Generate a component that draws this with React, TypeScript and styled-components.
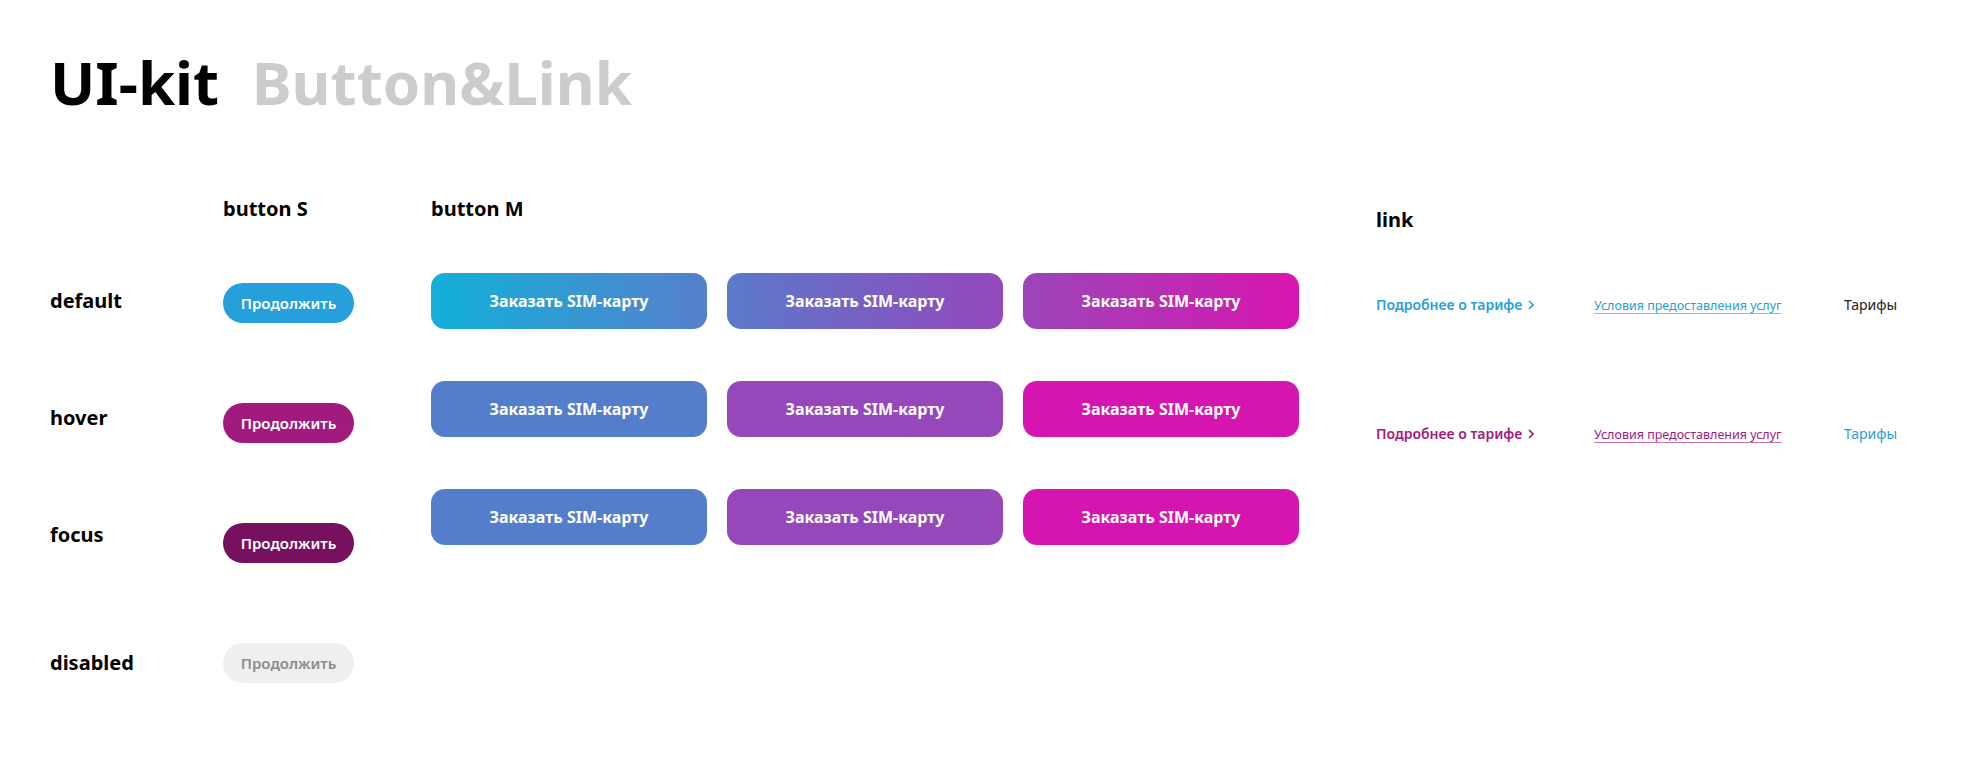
import styled, { createGlobalStyle } from "styled-components";

const GlobalStyle = createGlobalStyle`
  body {
    margin: 0;
    background: #fff;
    font-family: "Noto Sans", "Open Sans", Arial, sans-serif;
    color: #000;
  }
`;

type Variant = "default" | "hover" | "focus" | "disabled";

const STATES: { name: Variant; top: number }[] = [
  { name: "default", top: 64 },
  { name: "hover", top: 89 },
  { name: "focus", top: 89 },
  { name: "disabled", top: 100 },
];

const SMALL_BG: Record<Variant, string> = {
  default: "#26a0da",
  hover: "#a01a80",
  focus: "#77105e",
  disabled: "#efefef",
};

const M_ROWS = [
  [
    "linear-gradient(90deg, #12b0da 0%, #5680cc 100%)",
    "linear-gradient(90deg, #5a7aca 0%, #9547bb 100%)",
    "linear-gradient(90deg, #9a46b9 0%, #d915b0 100%)",
  ],
  ["#547ecc", "#9648bb", "#d615b0"],
  ["#547ecc", "#9648bb", "#d615b0"],
];

const ChevronRight = ({ color }: { color: string }) => (
  <svg width="6" height="10" viewBox="0 0 6 10" fill="none">
    <path d="M1 1l4 4-4 4" stroke={color} strokeWidth="1.6" />
  </svg>
);

const App = () => {
  return (
    <Page>
      <GlobalStyle />
      <Title>
        UI-kit <Sub>Button&amp;Link</Sub>
      </Title>
      <Board>
        <LabelCol>
          <Heading />
          {STATES.map((s) => (
            <StateLabel key={s.name} $top={s.top}>
              {s.name}
            </StateLabel>
          ))}
        </LabelCol>

        <SmallCol>
          <Heading>button S</Heading>
          {STATES.map((s) => (
            <SmallButton key={s.name} $variant={s.name}>
              Продолжить
            </SmallButton>
          ))}
        </SmallCol>

        <MediumCol>
          <Heading>button M</Heading>
          <MediumGrid>
            {M_ROWS.map((row, i) =>
              row.map((bg, j) => (
                <MediumButton key={`${i}-${j}`} $bg={bg}>
                  Заказать SIM-карту
                </MediumButton>
              ))
            )}
          </MediumGrid>
        </MediumCol>

        <LinkCol>
          <LinkHeading>link</LinkHeading>
          <LinkRow>
            <MoreLink $color="#26a0da">
              Подробнее о тарифе <ChevronRight color="#26a0da" />
            </MoreLink>
            <TermsLink $color="#26a0da" $line="rgba(38, 160, 218, 0.6)">
              Условия предоставления услуг
            </TermsLink>
            <PlainLink $color="#222">Тарифы</PlainLink>
          </LinkRow>
          <LinkRow $gap>
            <MoreLink $color="#a01a80">
              Подробнее о тарифе <ChevronRight color="#a01a80" />
            </MoreLink>
            <TermsLink $color="#a01a80" $line="rgba(160, 26, 128, 0.6)">
              Условия предоставления услуг
            </TermsLink>
            <PlainLink $color="#26a0da">Тарифы</PlainLink>
          </LinkRow>
        </LinkCol>
      </Board>
    </Page>
  );
};

export default App;

const Page = styled.div`
  padding: 52px 0 0 50px;
  width: 1964px;
  height: 762px;
  box-sizing: border-box;
`;

const Title = styled.h1`
  margin: 0;
  font-size: 60px;
  line-height: 60px;
  font-weight: 700;
  color: #000;
  word-spacing: 17px;
`;

const Sub = styled.span`
  color: #cccccc;
`;

const Board = styled.div`
  display: flex;
  margin-top: 83px;
`;

const Heading = styled.div`
  height: 28px;
  font-size: 20px;
  line-height: 28px;
  font-weight: 700;
`;

const LabelCol = styled.div`
  display: flex;
  flex-direction: column;
  width: 173px;
`;

const StateLabel = styled.div<{ $top: number }>`
  margin-top: ${(p) => p.$top}px;
  font-size: 20px;
  line-height: 28px;
  font-weight: 700;
`;

const SmallCol = styled.div`
  display: flex;
  flex-direction: column;
  gap: 80px;
  width: 208px;

  & > :first-child {
    margin-bottom: -20px;
  }
`;

const SmallButton = styled.button<{ $variant: Variant }>`
  width: 131px;
  height: 40px;
  border: none;
  border-radius: 20px;
  padding: 0;
  font-family: inherit;
  font-size: 15px;
  font-weight: 600;
  color: ${(p) => (p.$variant === "disabled" ? "#8c8c8c" : "#fff")};
  background: ${(p) => SMALL_BG[p.$variant]};
`;

const MediumCol = styled.div`
  display: flex;
  flex-direction: column;
`;

const MediumGrid = styled.div`
  display: grid;
  grid-template-columns: repeat(3, 276px);
  grid-auto-rows: 56px;
  column-gap: 20px;
  row-gap: 52px;
  margin-top: 50px;
`;

const MediumButton = styled.button<{ $bg: string }>`
  border: none;
  border-radius: 14px;
  padding: 0;
  font-family: inherit;
  font-size: 16px;
  font-weight: 700;
  color: #fff;
  background: ${(p) => p.$bg};
`;

const LinkCol = styled.div`
  display: flex;
  flex-direction: column;
  margin-left: 77px;
  padding-top: 11px;
`;

const LinkHeading = styled(Heading)`
  margin-bottom: 61px;
`;

const LinkRow = styled.div<{ $gap?: boolean }>`
  display: grid;
  grid-template-columns: 218px 250px auto;
  align-items: baseline;
  height: 20px;
  line-height: 20px;
  margin-top: ${(p) => (p.$gap ? "109px" : "0")};
`;

const MoreLink = styled.a<{ $color: string }>`
  display: inline-flex;
  align-items: center;
  gap: 6px;
  font-size: 14px;
  font-weight: 600;
  color: ${(p) => p.$color};
  text-decoration: none;
`;

const TermsLink = styled.a<{ $color: string; $line: string }>`
  font-size: 12.5px;
  color: ${(p) => p.$color};
  text-decoration: underline;
  text-decoration-color: ${(p) => p.$line};
  text-underline-offset: 3px;
`;

const PlainLink = styled.a<{ $color: string }>`
  font-size: 14px;
  color: ${(p) => p.$color};
  text-decoration: none;
`;
